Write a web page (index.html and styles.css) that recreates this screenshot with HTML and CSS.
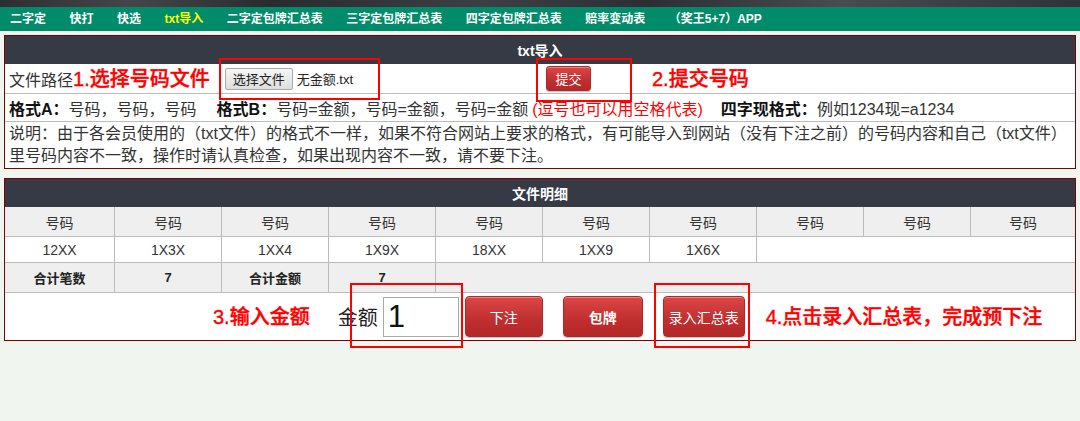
FILE: index.html
```html
<!DOCTYPE html>
<html lang="zh-CN">
<head>
<meta charset="utf-8">
<title>txt导入</title>
<link rel="stylesheet" href="styles.css">
</head>
<body>
<div class="topband"></div>
<nav class="nav">
  <a href="#">二字定</a>
  <a href="#">快打</a>
  <a href="#">快选</a>
  <a href="#" class="active">txt导入</a>
  <a href="#">二字定包牌汇总表</a>
  <a href="#">三字定包牌汇总表</a>
  <a href="#">四字定包牌汇总表</a>
  <a href="#">赔率变动表</a>
  <a href="#">（奖王5+7）APP</a>
</nav>
<main class="page">
  <section class="panel">
    <div class="panel-head">txt导入</div>
    <div class="row row-file">
      <div class="cell-left">
        <span class="label">文件路径</span>
        <span class="note">1.选择号码文件</span>
        <button class="btn-file">选择文件</button>
        <span class="filename">无金额.txt</span>
      </div>
      <div class="cell-right">
        <button class="btn-red btn-submit">提交</button>
        <span class="note note-submit">2.提交号码</span>
      </div>
    </div>
    <div class="row row-format">
      <b>格式A：</b><span>号码，号码，号码</span>
      <b class="gap-b">格式B：</b><span>号码=金额，号码=金额，号码=金额</span>
      <span class="red-paren">(逗号也可以用空格代表)</span>
      <b class="gap-c">四字现格式：</b><span>例如1234现=a1234</span>
    </div>
    <div class="row row-desc">说明：由于各会员使用的（txt文件）的格式不一样，如果不符合网站上要求的格式，有可能导入到网站（没有下注之前）的号码内容和自己（txt文件）<br>里号码内容不一致，操作时请认真检查，如果出现内容不一致，请不要下注。</div>
    <span class="mark mark-1"></span>
    <span class="mark mark-2"></span>
  </section>

  <section class="panel">
    <div class="panel-head">文件明细</div>
    <div class="grid">
      <div class="c h">号码</div><div class="c h">号码</div><div class="c h">号码</div><div class="c h">号码</div><div class="c h">号码</div><div class="c h">号码</div><div class="c h">号码</div><div class="c h">号码</div><div class="c h">号码</div><div class="c h last">号码</div>
      <div class="c d">12XX</div><div class="c d">1X3X</div><div class="c d">1XX4</div><div class="c d">1X9X</div><div class="c d">18XX</div><div class="c d">1XX9</div><div class="c d">1X6X</div><div class="c d span3"></div>
      <div class="c s">合计笔数</div><div class="c s">7</div><div class="c s">合计金额</div><div class="c s">7</div><div class="c s span6"></div>
    </div>
    <div class="actions">
      <span class="note">3.输入金额</span>
      <span class="amount-label">金额</span>
      <input class="amount" type="text" value="1">
      <button class="btn-red btn-big">下注</button>
      <button class="btn-red btn-big btn-bold">包牌</button>
      <button class="btn-red btn-big btn-wide">录入汇总表</button>
      <span class="note note-last">4.点击录入汇总表，完成预下注</span>
    </div>
    <span class="mark mark-3"></span>
    <span class="mark mark-4"></span>
  </section>
</main>
</body>
</html>
```

FILE: styles.css
```css
* { box-sizing: border-box; }
html, body { margin: 0; padding: 0; }
body {
  width: 1080px;
  height: 421px;
  overflow: hidden;
  background: #f1f5ef;
  font-family: "Liberation Sans", "Noto Sans CJK SC", sans-serif;
  color: #333;
}
.topband {
  height: 7px;
  background: linear-gradient(90deg, #2d2e31 0%, #45464a 12%, #2a2b2f 25%, #3d3f44 45%, #2c2e33 60%, #4a4b4f 78%, #303238 100%);
}
.nav {
  height: 24px;
  background: #008c6a;
  display: flex;
  align-items: center;
  padding-left: 10px;
  gap: 23.5px;
}
.nav a {
  color: #fff;
  font-size: 12px;
  font-weight: bold;
  text-decoration: none;
  line-height: 24px;
}
.nav a.active { color: #ffff00; }

.page {
  padding: 4px 4px 0;
  display: flex;
  flex-direction: column;
  gap: 9px;
}
.panel {
  position: relative;
  border: 1px solid #7b0000;
  background: #fff;
}
.panel-head {
  height: 28px;
  background: #363a44;
  color: #fff;
  font-weight: bold;
  font-size: 14px;
  display: flex;
  align-items: center;
  justify-content: center;
}
.row {
  border-bottom: 1px solid #bbb;
  font-size: 16px;
}
.row-file {
  height: 30px;
  display: grid;
  grid-template-columns: 536px 1fr;
}
.cell-left, .cell-right {
  display: flex;
  align-items: center;
}
.cell-left { padding-left: 4px; }
.cell-right { padding-left: 5px; }
.note {
  color: #ff0000;
  font-size: 20px;
  font-weight: 500;
  line-height: 1;
  -webkit-text-stroke: 0.4px #ff0000;
}
.btn-file {
  margin-left: 15px;
  width: 68px;
  height: 22px;
  padding: 0;
  font-family: inherit;
  font-size: 13px;
  color: #222;
  background: linear-gradient(#f6f6f6, #dedede);
  border: 1px solid #a9a9a9;
  border-radius: 2px;
}
.filename {
  margin-left: 4px;
  font-size: 13px;
  color: #222;
}
.btn-red {
  font-family: inherit;
  color: #fff;
  background: linear-gradient(#dc4646, #c02e2e 60%, #b42828);
  border: 1px solid #a82a2a;
  box-shadow: inset 0 1px 0 rgba(255, 255, 255, 0.35), 0 1px 1px rgba(0, 0, 0, 0.25);
  padding: 0;
}
.btn-submit {
  width: 45px;
  height: 25px;
  font-size: 13px;
  border-radius: 3px;
}
.note-submit { margin-left: 61px; }

.row-format {
  height: 28px;
  display: flex;
  align-items: center;
  padding-left: 4px;
  white-space: nowrap;
  color: #333;
}
.row-format b { color: #111; }
.gap-b { margin-left: 20px; }
.red-paren { color: #ff0000; margin-left: 4px; }
.gap-c { margin-left: 18px; }

.row-desc {
  height: 46px;
  border-bottom: none;
  padding: 1px 4px 0;
  line-height: 22px;
  white-space: nowrap;
}

.grid {
  display: grid;
  grid-template-columns: 110px repeat(8, 107px) 1fr;
  font-size: 14px;
}
.c {
  display: flex;
  align-items: center;
  justify-content: center;
  border-right: 1px solid #bbb;
  border-bottom: 1px solid #bbb;
}
.c.last { border-right: none; }
.h { height: 30px; background: #efefef; color: #333; }
.d { height: 26px; background: #fff; color: #333; }
.s { height: 30px; background: #efefef; color: #222; font-weight: bold; font-size: 13px; }
.span3 { grid-column: span 3; border-right: none; }
.span6 { grid-column: span 6; border-right: none; }

.actions {
  height: 47px;
  display: flex;
  align-items: center;
  padding-left: 208px;
}
.amount-label {
  margin-left: 28px;
  font-size: 20px;
  color: #222;
}
.amount {
  margin-left: 5px;
  width: 76px;
  height: 40px;
  border: 1px solid #aaa;
  font-family: "Liberation Sans", sans-serif;
  font-size: 31px;
  padding: 0 4px;
  color: #111;
  background: #fff;
}
.btn-big {
  height: 41px;
  width: 78px;
  padding: 0;
  font-size: 14px;
  border-radius: 4px;
  margin-left: 20px;
}
.amount + .btn-big { margin-left: 6px; }
.btn-bold { font-weight: bold; width: 80px; }
.btn-wide { width: 82px; }
.note-last { margin-left: 21px; }

.mark {
  position: absolute;
  border: 2px solid #ff0000;
  pointer-events: none;
}
.mark-1 { left: 214px; top: 22px; width: 161px; height: 42px; }
.mark-2 { left: 531px; top: 22px; width: 96px; height: 44px; }
.mark-3 { left: 345px; top: 104px; width: 113px; height: 65px; }
.mark-4 { left: 649px; top: 104px; width: 96px; height: 65px; }
```
